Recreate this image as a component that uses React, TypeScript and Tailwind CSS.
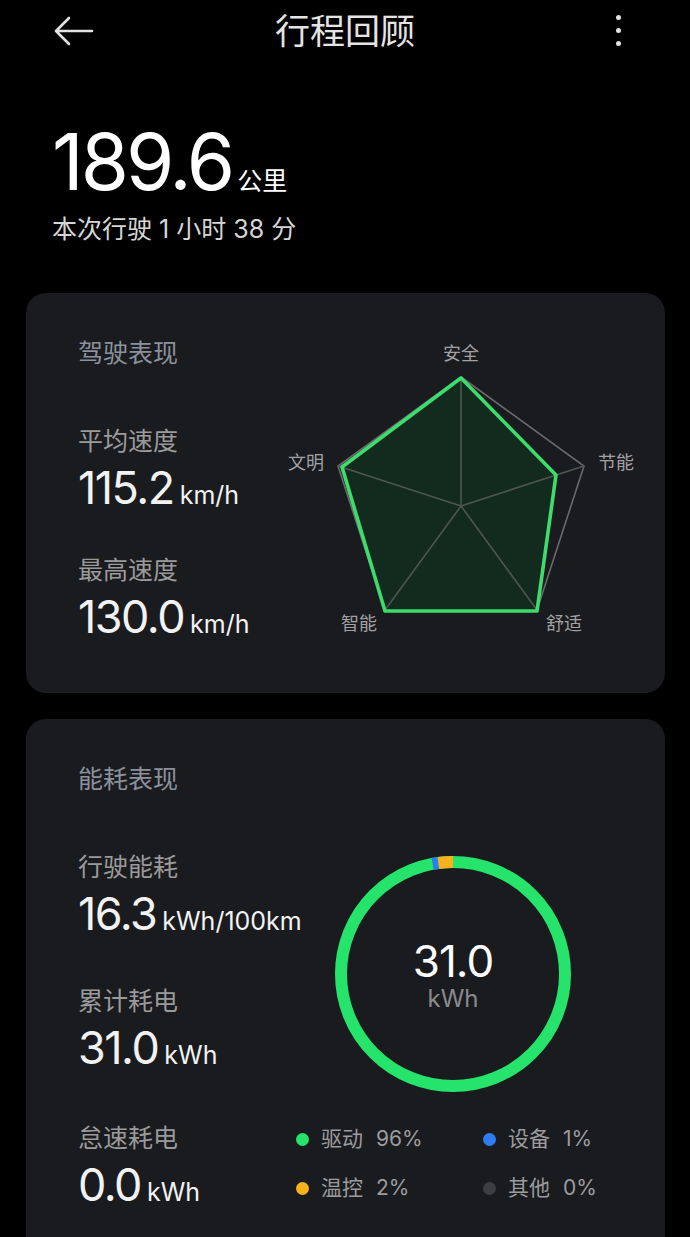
import React from "react";

const NUM = { fontFamily: 'Inter, "Noto Sans CJK SC", sans-serif' };
const CJK = { fontFamily: 'Inter, "Noto Sans CJK SC", sans-serif' };

function Metric({ label, value, unit, gap }: { label: string; value: string; unit: string; gap: string }) {
  return (
    <div className={gap}>
      <div className="text-[25px] leading-[30px] text-[#9a9a9a]" style={CJK}>{label}</div>
      <div className="mt-[7px] flex items-baseline h-[50px] text-[#f2f2f2]" style={NUM}>
        <span className="text-[45px] leading-[50px] tracking-[-1.5px]">{value}</span>
        <span className="ml-[6px] text-[25px] leading-none">{unit}</span>
      </div>
    </div>
  );
}

function Radar() {
  const outer = "461,376 584,465 537,609 385,609 338,465";
  const data = "461,377 556,474 537,610 385,610 342,466";
  const c = [461, 505];
  const spokes = [
    [461, 376],
    [584, 465],
    [537, 609],
    [385, 609],
    [338, 465],
  ];
  return (
    <svg width="380" height="310" viewBox="280 330 380 310" className="block">
      <polygon points={outer} fill="none" stroke="#6a6a6c" strokeWidth="1.6" />
      <polygon points={data} fill="#132a1f" stroke="none" />
      {spokes.map((p, i) => (
        <line key={i} x1={c[0]} y1={c[1]} x2={p[0]} y2={p[1]} stroke="#4e5650" strokeWidth="1.6" />
      ))}
      <polygon points={data} fill="none" stroke="#3ddc6c" strokeWidth="3.6" strokeLinejoin="round" />
      <g fill="#a2a2a4" fontSize="18" style={CJK}>
        <text x="461" y="359" textAnchor="middle">安全</text>
        <text x="598" y="468">节能</text>
        <text x="546" y="629">舒适</text>
        <text x="341" y="629">智能</text>
        <text x="288" y="468">文明</text>
      </g>
    </svg>
  );
}

function Donut() {
  return (
    <svg width="371" height="340" viewBox="294 763 371 340" className="block">
      <circle cx="453" cy="973" r="112" fill="none" stroke="#25e36b" strokeWidth="12" />
      <path d="M432.6 862.9 A112 112 0 0 1 438.4 861.96" fill="none" stroke="#2f7cf2" strokeWidth="12" />
      <path d="M438.4 861.96 A112 112 0 0 1 453 861" fill="none" stroke="#f6b21c" strokeWidth="12" />
      <text x="453" y="976" textAnchor="middle" fill="#ffffff" fontSize="44" style={NUM} letterSpacing="-1">31.0</text>
      <text x="453" y="1006" textAnchor="middle" fill="#8a8a8c" fontSize="24" style={NUM}>kWh</text>
    </svg>
  );
}

function Legend({ color, name, pct }: { color: string; name: string; pct: string }) {
  return (
    <div className="flex items-center h-[30px] text-[21px] leading-[30px] text-[#9c9c9e]" style={CJK}>
      <span className="shrink-0 w-[13px] h-[13px] rounded-full" style={{ backgroundColor: color }} />
      <span className="ml-[12px]">{name}</span>
      <span className="ml-[13px]">{pct}</span>
    </div>
  );
}

export default function App() {
  return (
    <div className="w-[690px] min-h-[1237px] bg-black overflow-hidden" style={CJK}>
      {/* header */}
      <div className="relative h-[62px] flex items-center justify-center">
        <svg className="absolute left-[54px] top-[16px]" width="40" height="30" viewBox="0 0 40 30">
          <path d="M2 15 H38 M15 2 L2 15 L15 28" fill="none" stroke="#e2e2e2" strokeWidth="2.6" strokeLinecap="round" strokeLinejoin="round" />
        </svg>
        <div className="text-[35px] leading-[40px] text-[#e4e4e4]">行程回顾</div>
        <div className="absolute left-[616px] top-[15px] flex flex-col gap-[8px]">
          <span className="w-[5px] h-[5px] rounded-full bg-[#e2e2e2]" />
          <span className="w-[5px] h-[5px] rounded-full bg-[#e2e2e2]" />
          <span className="w-[5px] h-[5px] rounded-full bg-[#e2e2e2]" />
        </div>
      </div>

      {/* distance */}
      <div className="ml-[52px] mt-[60px] flex items-baseline h-[80px] text-white">
        <span className="text-[78px] leading-[80px] tracking-[-3px]" style={NUM}>189.6</span>
        <span className="ml-[5px] text-[25px] leading-none">公里</span>
      </div>
      <div className="ml-[52px] mt-[12px] text-[25px] leading-[30px] text-[#d6d6d6]">本次行驶 1 小时 38 分</div>

      {/* driving card */}
      <div className="ml-[26px] mt-[49px] w-[639px] h-[400px] rounded-[20px] bg-[#1a1b1f] flex pt-[38px]">
        <div className="w-[254px] pl-[52px] pt-[7px]">
          <div className="text-[25px] leading-[30px] text-[#8b919c]">驾驶表现</div>
          <Metric label="平均速度" value="115.2" unit="km/h" gap="mt-[58px]" />
          <Metric label="最高速度" value="130.0" unit="km/h" gap="mt-[42px]" />
        </div>
        <Radar />
      </div>

      {/* energy card */}
      <div className="ml-[26px] mt-[26px] w-[639px] rounded-[20px] bg-[#1a1b1f] flex pt-[45px] pb-[60px]">
        <div className="w-[268px] pl-[52px]">
          <div className="text-[25px] leading-[30px] text-[#8b919c]">能耗表现</div>
          <Metric label="行驶能耗" value="16.3" unit="kWh/100km" gap="mt-[58px]" />
          <Metric label="累计耗电" value="31.0" unit="kWh" gap="mt-[47px]" />
          <Metric label="怠速耗电" value="0.0" unit="kWh" gap="mt-[50px]" />
        </div>
        <div className="flex flex-col">
          <Donut />
          <div className="mt-[20px] ml-[2px] grid grid-cols-[187px_1fr] gap-y-[19px]">
            <Legend color="#25e36b" name="驱动" pct="96%" />
            <Legend color="#2f7cf2" name="设备" pct="1%" />
            <Legend color="#f6b21c" name="温控" pct="2%" />
            <Legend color="#3d3e42" name="其他" pct="0%" />
          </div>
        </div>
      </div>
    </div>
  );
}
